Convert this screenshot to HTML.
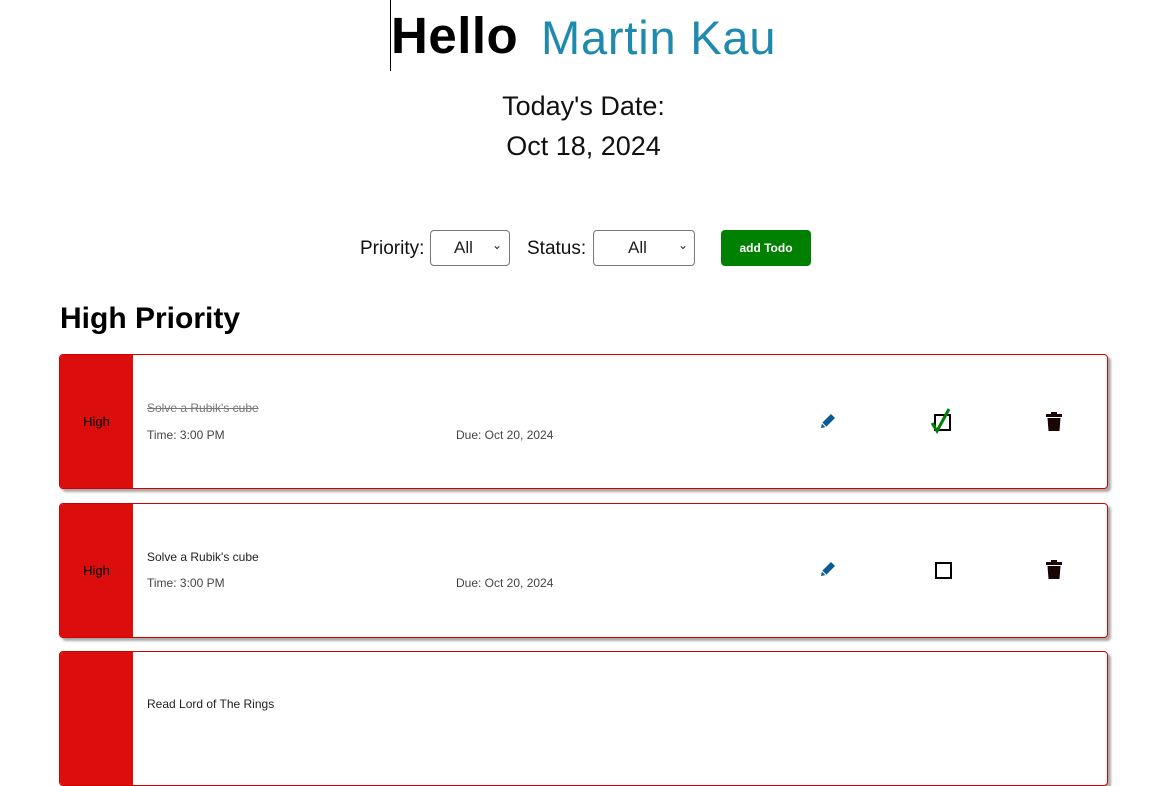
<!DOCTYPE html>
<html><head><meta charset="utf-8"><style>
*{margin:0;padding:0;box-sizing:border-box}
body{width:1173px;height:704px;overflow:hidden;background:#fff;font-family:"Liberation Sans",sans-serif;position:relative;color:#000}
.a{position:absolute;white-space:nowrap}
.card{position:absolute;left:59px;width:1049px;height:135px;border:1px solid #d40000;border-radius:4px;box-shadow:3px 3px 2px #aaa;background:#fff;overflow:hidden}
.pr{position:absolute;left:0;top:0;width:73px;height:100%;background:#dc0d0d;font-size:13px;display:flex;align-items:center;justify-content:center}
.t{position:absolute;left:87px;font-size:12px;color:#222}
.s{position:absolute;font-size:12px;color:#444}
.sel{position:absolute;top:230px;height:36px;border:1px solid #777;border-radius:4px;font-size:17px;color:#222}
</style></head><body>
<div class="a" style="left:390px;top:0;width:1px;height:71px;background:#000"></div>
<div class="a" style="left:391px;top:6px;font-size:51px;font-weight:bold;letter-spacing:0.5px">Hello</div>
<div class="a" style="left:541px;top:10px;font-size:47px;color:#1f8aad;letter-spacing:0.8px">Martin Kau</div>
<div class="a" style="left:0;width:1167px;text-align:center;top:91px;font-size:27px;color:#111">Today's Date:</div>
<div class="a" style="left:0;width:1167px;text-align:center;top:131px;font-size:27px;color:#111">Oct 18, 2024</div>
<div class="a" style="left:360px;top:238px;font-size:19px;color:#111">Priority:</div>
<div class="sel" style="left:430px;width:80px"><span class="a" style="left:23px;top:7px">All</span><span class="a" style="left:61px;top:7px;font-size:12px">&#8964;</span></div>
<div class="a" style="left:527px;top:238px;font-size:19px;color:#111">Status:</div>
<div class="sel" style="left:593px;width:102px"><span class="a" style="left:34px;top:7px">All</span><span class="a" style="left:84px;top:7px;font-size:12px">&#8964;</span></div>
<div class="a" style="left:721px;top:230px;width:90px;height:36px;background:#008000;border-radius:4px;color:#fff;font-size:12px;font-weight:bold;text-align:center;line-height:36px">add Todo</div>
<div class="a" style="left:60px;top:302px;font-size:30px;font-weight:bold">High Priority</div>

<div class="card" style="top:354px"><div class="pr">High</div>
<div class="t" style="top:46px;color:#777;text-decoration:line-through">Solve a Rubik's cube</div>
<div class="s" style="left:87px;top:73px">Time: 3:00 PM</div>
<div class="s" style="left:396px;top:73px">Due: Oct 20, 2024</div>
<svg class="a" style="left:758px;top:56px" width="20" height="20" viewBox="0 0 20 20"><path d="M3 17l1-5 9-9 4 4-9 9z" fill="#0b5a96"/><path d="M4 12l4 4" stroke="#fff" stroke-width="1.2"/></svg>
<div class="a" style="left:874px;top:59px;width:17px;height:17px;border:2px solid #000"></div>
<svg class="a" style="left:870px;top:52px" width="24" height="28" viewBox="0 0 24 28"><path d="M2 16l5 8 12-22" stroke="#008000" stroke-width="3" fill="none"/></svg>
<svg class="a" style="left:986px;top:57px" width="16" height="19" viewBox="0 0 16 19"><rect x="0" y="2" width="16" height="3" fill="#1a0505"/><rect x="5" y="0" width="6" height="3" fill="#1a0505"/><path d="M1.5 6h13l-1 13h-11z" fill="#1a0505"/></svg>
</div>

<div class="card" style="top:503px"><div class="pr">High</div>
<div class="t" style="top:46px">Solve a Rubik's cube</div>
<div class="s" style="left:87px;top:72px">Time: 3:00 PM</div>
<div class="s" style="left:396px;top:72px">Due: Oct 20, 2024</div>
<svg class="a" style="left:758px;top:55px" width="20" height="20" viewBox="0 0 20 20"><path d="M3 17l1-5 9-9 4 4-9 9z" fill="#0b5a96"/><path d="M4 12l4 4" stroke="#fff" stroke-width="1.2"/></svg>
<div class="a" style="left:875px;top:58px;width:17px;height:17px;border:2px solid #000"></div>
<svg class="a" style="left:986px;top:56px" width="16" height="19" viewBox="0 0 16 19"><rect x="0" y="2" width="16" height="3" fill="#1a0505"/><rect x="5" y="0" width="6" height="3" fill="#1a0505"/><path d="M1.5 6h13l-1 13h-11z" fill="#1a0505"/></svg>
</div>

<div class="card" style="top:651px"><div class="pr"></div>
<div class="t" style="top:45px">Read Lord of The Rings</div>
</div>
</body></html>
